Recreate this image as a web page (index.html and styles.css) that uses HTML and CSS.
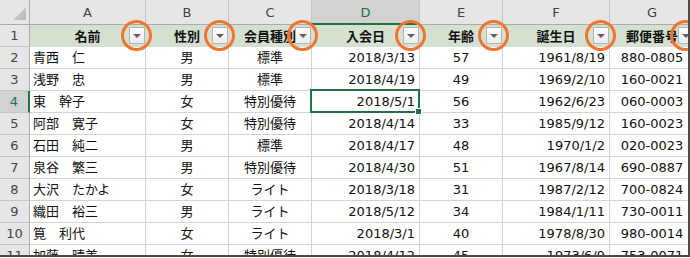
FILE: index.html
```html
<!DOCTYPE html>
<html lang="ja">
<head>
<meta charset="utf-8">
<title>会員名簿</title>
<link rel="stylesheet" href="styles.css">
</head>
<body>
<div class="sheet">
  <div class="grid">
    <div class="corner"><span class="tri"></span></div>
    <div class="ch">A</div>
    <div class="ch">B</div>
    <div class="ch">C</div>
    <div class="ch sel">D</div>
    <div class="ch">E</div>
    <div class="ch">F</div>
    <div class="ch">G</div>

    <div class="rh">1</div>
    <div class="hd">名前<span class="btn"></span><span class="ring"></span></div>
    <div class="hd">性別<span class="btn"></span><span class="ring"></span></div>
    <div class="hd">会員種別<span class="btn"></span><span class="ring"></span></div>
    <div class="hd">入会日<span class="btn"></span><span class="ring"></span></div>
    <div class="hd">年齢<span class="btn"></span><span class="ring"></span></div>
    <div class="hd">誕生日<span class="btn"></span><span class="ring"></span></div>
    <div class="hd">郵便番号<span class="btn"></span><span class="ring"></span></div>

    <div class="rh">2</div><div class="c l">青西　仁</div><div class="c m">男</div><div class="c m">標準</div><div class="c r">2018/3/13</div><div class="c m">57</div><div class="c r">1961/8/19</div><div class="c m">880-0805</div>
    <div class="rh">3</div><div class="c l">浅野　忠</div><div class="c m">男</div><div class="c m">標準</div><div class="c r">2018/4/19</div><div class="c m">49</div><div class="c r">1969/2/10</div><div class="c m">160-0021</div>
    <div class="rh rsel">4</div><div class="c l">東　幹子</div><div class="c m">女</div><div class="c m">特別優待</div><div class="c r active">2018/5/1<span class="selbox"><span class="handle"></span></span></div><div class="c m">56</div><div class="c r">1962/6/23</div><div class="c m">060-0003</div>
    <div class="rh">5</div><div class="c l">阿部　寛子</div><div class="c m">女</div><div class="c m">特別優待</div><div class="c r">2018/4/14</div><div class="c m">33</div><div class="c r">1985/9/12</div><div class="c m">160-0023</div>
    <div class="rh">6</div><div class="c l">石田　純二</div><div class="c m">男</div><div class="c m">標準</div><div class="c r">2018/4/17</div><div class="c m">48</div><div class="c r">1970/1/2</div><div class="c m">020-0023</div>
    <div class="rh">7</div><div class="c l">泉谷　繁三</div><div class="c m">男</div><div class="c m">特別優待</div><div class="c r">2018/4/30</div><div class="c m">51</div><div class="c r">1967/8/14</div><div class="c m">690-0887</div>
    <div class="rh">8</div><div class="c l">大沢　たかよ</div><div class="c m">女</div><div class="c m">ライト</div><div class="c r">2018/3/18</div><div class="c m">31</div><div class="c r">1987/2/12</div><div class="c m">700-0824</div>
    <div class="rh">9</div><div class="c l">織田　裕三</div><div class="c m">男</div><div class="c m">ライト</div><div class="c r">2018/5/12</div><div class="c m">34</div><div class="c r">1984/1/11</div><div class="c m">730-0011</div>
    <div class="rh">10</div><div class="c l">筧　利代</div><div class="c m">女</div><div class="c m">ライト</div><div class="c r">2018/3/1</div><div class="c m">40</div><div class="c r">1978/8/30</div><div class="c m">980-0014</div>
    <div class="rh">11</div><div class="c l">加藤　晴美</div><div class="c m">女</div><div class="c m">特別優待</div><div class="c r">2018/4/12</div><div class="c m">45</div><div class="c r">1973/6/9</div><div class="c m">753-0071</div>
  </div>
</div>
</body>
</html>
```
FILE: styles.css
```css
* { box-sizing: border-box; }
html, body { margin: 0; padding: 0; background: #fff; }
body {
  font-family: "DejaVu Sans", "Noto Sans CJK JP", sans-serif;
  font-size: 13px;
  color: #111;
}
.sheet {
  width: 690px;
  height: 257px;
  overflow: hidden;
  border-right: 2px solid #4a4a4a;
  border-bottom: 2px solid #4a4a4a;
}
.grid {
  display: grid;
  grid-template-columns: 30px 116px 83px 83px 108px 83px 107px 85px;
  grid-template-rows: 25px repeat(11, 22px);
  width: 695px;
}
.grid > div {
  display: flex;
  align-items: center;
  white-space: nowrap;
  line-height: 1;
  position: relative;
}
.corner {
  background: #e6e6e6;
  border-right: 1px solid #ababab;
  border-bottom: 1px solid #ababab;
  justify-content: flex-end;
  align-items: flex-end !important;
  padding: 0 3px 4px 0;
}
.tri {
  width: 13px;
  height: 13px;
  background: linear-gradient(135deg, #d6d6d6, #b4b4b4);
  clip-path: polygon(100% 0, 100% 100%, 0 100%);
}
.ch {
  background: #e6e6e6;
  border-right: 1px solid #c6c6c6;
  border-bottom: 1px solid #ababab;
  justify-content: center;
  color: #444;
  padding-top: 1px;
}
.ch.sel {
  background: #d2d2d2;
  color: #217346;
  border-bottom: 2px solid #217346;
  padding-top: 2px;
}
.rh {
  background: #e6e6e6;
  border-right: 1px solid #ababab;
  border-bottom: 1px solid #c6c6c6;
  justify-content: center;
  color: #444;
}
.rh.rsel {
  background: #d2d2d2;
  color: #217346;
  border-right: 2px solid #217346;
}
.hd {
  background: #d5e1d0;
  border-right: 1px solid #d5e1d0;
  border-bottom: 1px solid #d5e1d0;
  justify-content: center;
  font-weight: bold;
  font-family: "Noto Sans CJK JP", sans-serif;
  color: #111;
}
.btn {
  position: absolute;
  right: 0;
  top: 2px;
  width: 16px;
  height: 17px;
  border: 1px solid #b4b4b4;
  background: linear-gradient(#fdfdfd, #ececec);
  display: flex;
  align-items: center;
  justify-content: center;
}
.btn::after {
  content: "";
  width: 0;
  height: 0;
  border-left: 4px solid transparent;
  border-right: 4px solid transparent;
  border-top: 4px solid #606060;
}
.ring {
  position: absolute;
  right: -7px;
  top: -5px;
  width: 31px;
  height: 31px;
  border: 3px solid #ef7530;
  border-radius: 50%;
  z-index: 5;
}
.c {
  border-right: 1px solid #d4d4d4;
  border-bottom: 1px solid #d4d4d4;
}
.c.l { justify-content: flex-start; padding-left: 3px; }
.c.m { justify-content: center; }
.c.r { justify-content: flex-end; padding-right: 4px; }
.selbox {
  position: absolute;
  left: -2px;
  top: -2px;
  right: -1px;
  bottom: -1px;
  border: 2px solid #217346;
  z-index: 3;
}
.handle {
  position: absolute;
  right: -3px;
  bottom: -3px;
  width: 5px;
  height: 5px;
  background: #217346;
  outline: 1px solid #fff;
}
```
